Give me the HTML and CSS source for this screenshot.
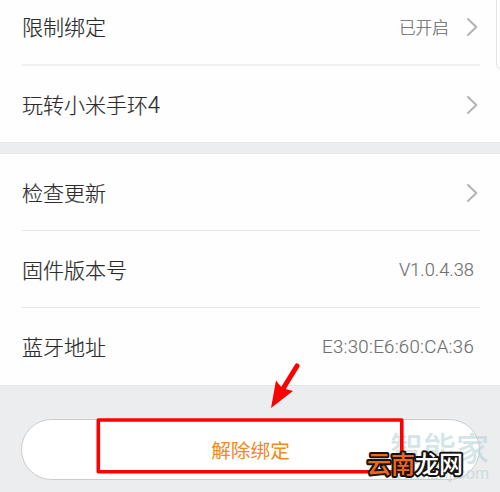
FILE: index.html
```html
<!DOCTYPE html>
<html lang="zh-CN">
<head>
<meta charset="utf-8">
<title>设备设置</title>
<link rel="stylesheet" href="styles.css">
</head>
<body>
<main class="screen">
  <section class="group group-first">
    <div class="row"><span class="label">限制绑定</span><span class="status">已开启</span><svg class="chevron" viewBox="0 0 12 20"><path d="M2 2L10.3 10L2 18"/></svg></div>
    <div class="row"><span class="label">玩转小米手环<span class="digit">4</span></span><svg class="chevron" viewBox="0 0 12 20"><path d="M2 2L10.3 10L2 18"/></svg></div>
  </section>
  <section class="group">
    <div class="row"><span class="label">检查更新</span><svg class="chevron" viewBox="0 0 12 20"><path d="M2 2L10.3 10L2 18"/></svg></div>
    <div class="row"><span class="label">固件版本号</span><span class="value version">V1.0.4.38</span></div>
    <div class="row"><span class="label">蓝牙地址</span><span class="value address">E3:30:E6:60:CA:36</span></div>
  </section>
  <button class="unbind">解除绑定</button>
  <div class="side-edge"></div>
  <div class="watermark"><span class="brand">智能家</span><span class="site">www.znj.com</span></div>
  <svg class="marks" viewBox="0 0 500 492">
    <rect x="98.3" y="420" width="303.5" height="51.7" fill="none" stroke="#f00" stroke-width="3.6" stroke-linejoin="round"/>
    <path d="M297 366L281 392" stroke="#f00" stroke-width="5" stroke-linecap="round"/>
    <path d="M271 408L276 380.5L282 388L293 391Z" fill="#f00"/>
    <g class="stamp"><text x="367" y="472.5" fill="#f26618">云南</text><text x="415" y="472.5" fill="#fff">龙网</text></g>
  </svg>
</main>
</body>
</html>
```
FILE: styles.css
```css
* { box-sizing: border-box; }
body {
  margin: 0;
  background: #ecedef;
  font-family: "Liberation Sans", "Noto Sans CJK SC", sans-serif;
}
.screen {
  position: relative;
  width: 500px;
  height: 492px;
  overflow: hidden;
  display: flow-root;
}
.group {
  background: #fefefe;
  padding: 0 20px 0 22px;
  margin-bottom: 12px;
  box-shadow: 0 0 0 1px #e5e7e8;
}
.group-first { margin-top: -12px; }
.row {
  height: 77px;
  padding-top: 1px;
  display: flex;
  align-items: center;
  border-bottom: 1px solid #e6e7e8;
}
.group-first .row:first-child { height: 78px; border-bottom: 2px solid #f0f0f0; }
.group-first .row:last-child { height: 76px; }
.row:last-child { border-bottom: 0; }
.label {
  flex: 1;
  padding-bottom: 2px;
  font: 300 21px/30px "Noto Sans CJK SC", sans-serif;
  color: #2c2c2c;
  -webkit-text-stroke: 0.2px #2c2c2c;
}
.digit { font-size: 23px; line-height: 1; }
.status {
  font: 300 16.7px/24px "Noto Sans CJK SC", sans-serif;
  color: #666;
  -webkit-text-stroke: 0.15px #666;
  margin-right: 17px;
}
.chevron {
  width: 12px;
  height: 20px;
  margin-right: 2px;
  fill: none;
  stroke: #b4b4b4;
  stroke-width: 2;
  stroke-linecap: round;
  stroke-linejoin: round;
}
.value {
  font-family: Roboto, sans-serif;
  font-weight: 300;
  font-size: 18.3px;
  color: #707070;
  -webkit-text-stroke: 0.15px #707070;
  margin-right: 6px;
}
.address { font-size: 18.6px; letter-spacing: 0.3px; }
.unbind {
  display: block;
  width: 459px;
  height: 61px;
  margin: 34px 0 0 21px;
  padding: 0;
  border: 1px solid #ccc;
  border-radius: 31px;
  background: #fff;
  color: #f28a20;
  font: 400 19.7px/57px "Noto Sans CJK SC", sans-serif;
}
.side-edge {
  position: absolute;
  top: -20px;
  left: 496px;
  width: 30px;
  height: 90px;
  border: 1px solid #e5e5e5;
  border-radius: 6px;
}
.watermark {
  position: absolute;
  left: 390px;
  top: 430px;
  width: 100px;
  color: #b8d4da;
  opacity: 0.6;
}
.brand {
  display: block;
  font: 500 33px/34px "Noto Sans CJK SC", sans-serif;
}
.site {
  display: block;
  font: 17px/20px "Liberation Sans", sans-serif;
  white-space: nowrap;
}
.marks {
  position: absolute;
  inset: 0;
  width: 500px;
  height: 492px;
}
.stamp {
  font: 500 24px "Noto Sans CJK SC", sans-serif;
  stroke: #171310;
  stroke-width: 4px;
  stroke-linejoin: round;
  paint-order: stroke;
}
```
